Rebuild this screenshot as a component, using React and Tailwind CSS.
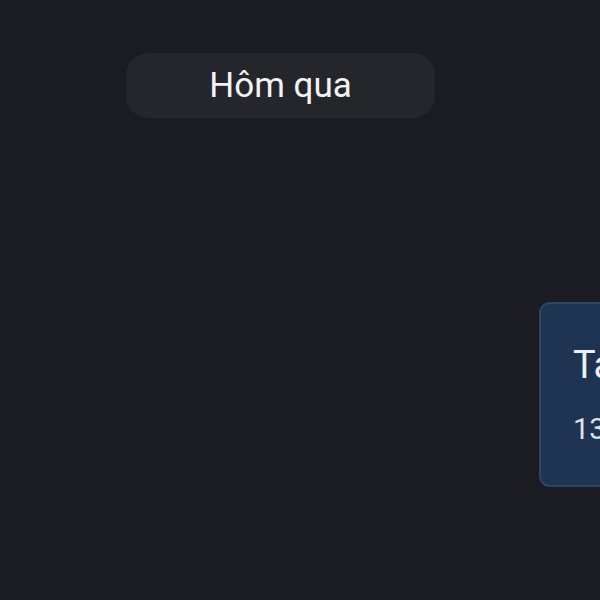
import React from "react";

function DayPill({ label }) {
  return (
    <div className="ml-[126px] pt-[53px]">
      <div className="w-[309px] h-[65px] rounded-[22px] bg-[#25262b] flex items-center justify-center">
        <span className="text-[35px] text-[#f3f3f5] leading-none">{label}</span>
      </div>
    </div>
  );
}

function EventCard() {
  return (
    <div className="ml-[539px] mt-[184px] w-[260px] h-[185px] rounded-[11px] border-2 border-[#2c4468] bg-[#1f3352] pl-[32px] pt-[42px]">
      <div className="text-[38px] text-[#eef1f6] leading-none whitespace-nowrap">Task review</div>
      <div className="mt-[31px] text-[29px] text-[#dde2ea] leading-none whitespace-nowrap">13:00</div>
    </div>
  );
}

export default function App() {
  return (
    <div
      className="w-[600px] h-[600px] overflow-hidden bg-[#1b1c21]"
      style={{ fontFamily: 'Roboto, "Noto Sans", sans-serif' }}
    >
      <DayPill label="Hôm qua" />
      <EventCard />
    </div>
  );
}
